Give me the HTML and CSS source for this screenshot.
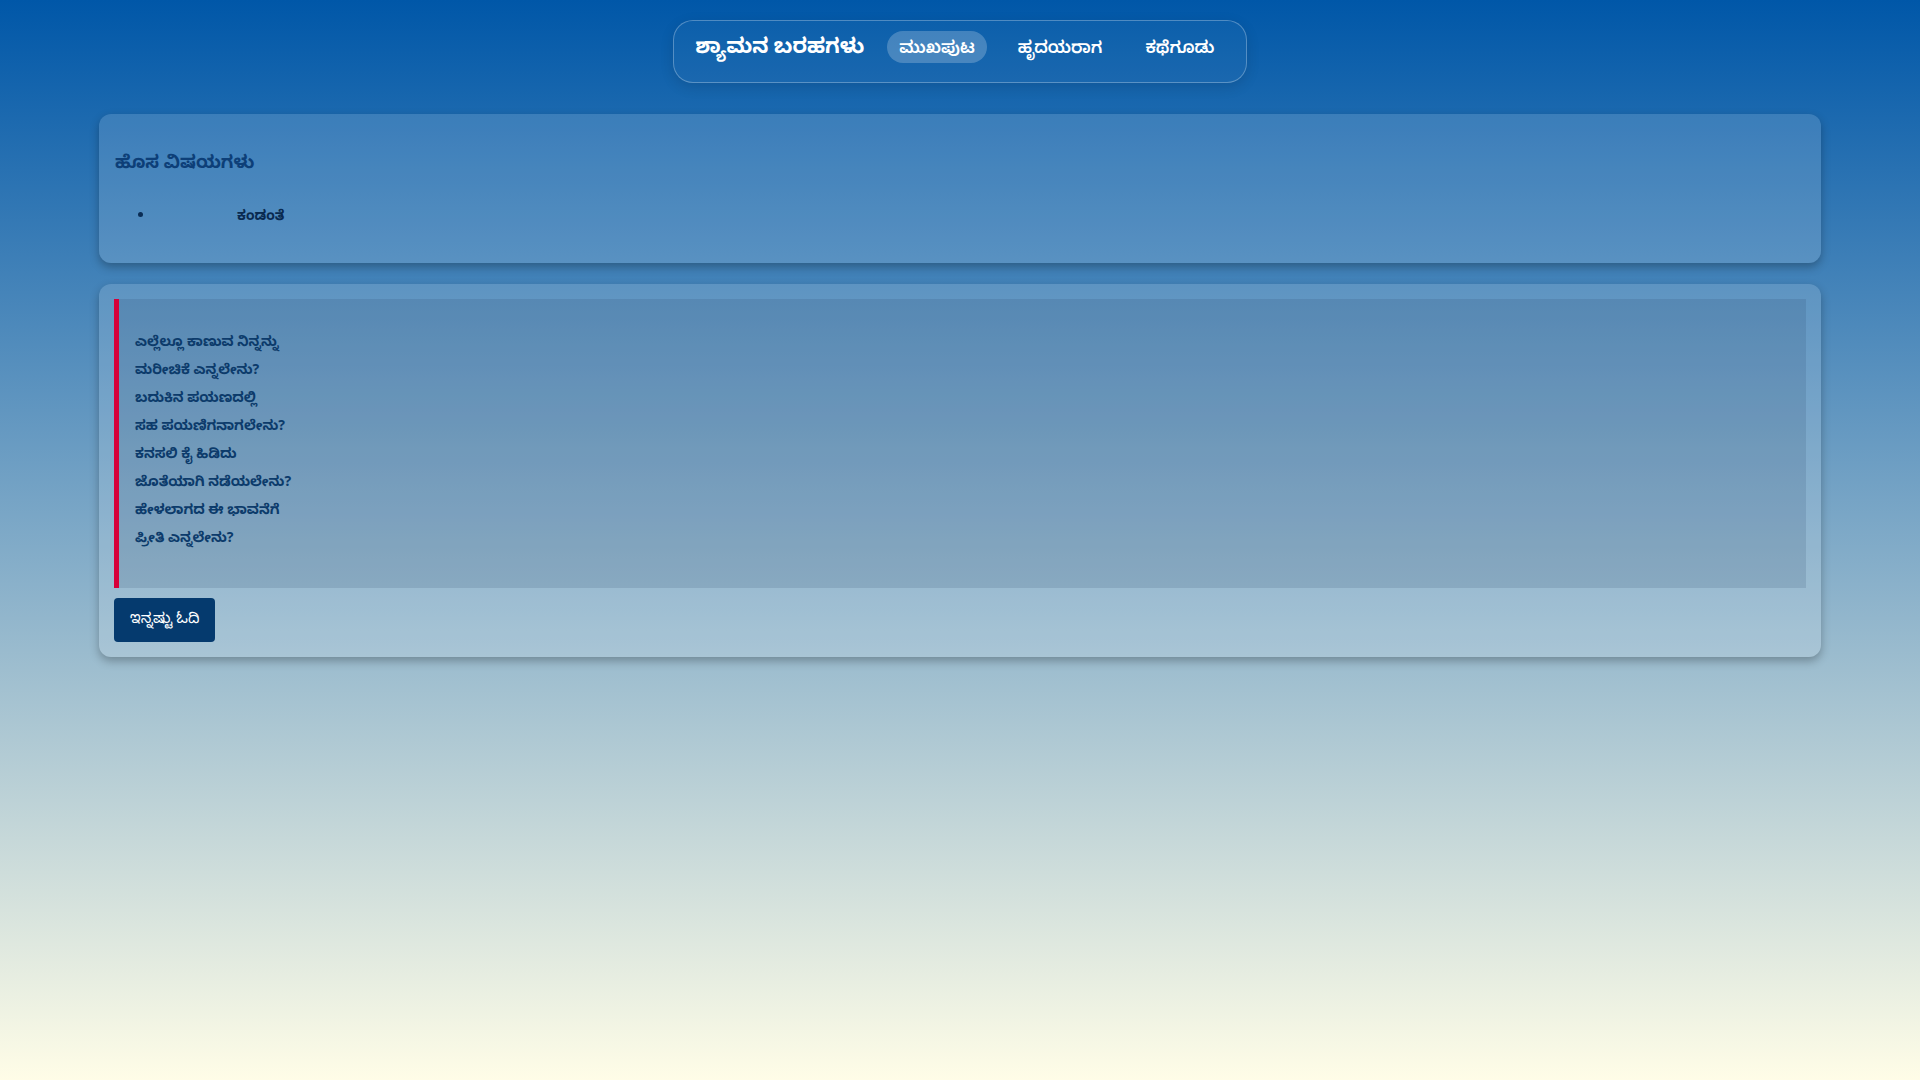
FILE: index.html
```html
<!DOCTYPE html>
<html lang="kn">
<head>
<meta charset="utf-8">
<title>ಶ್ಯಾಮನ ಬರಹಗಳು</title>
<link rel="stylesheet" href="styles.css">
</head>
<body>
<header class="top">
  <nav class="nav">
    <span class="brand">ಶ್ಯಾಮನ ಬರಹಗಳು</span>
    <a class="nav-link active" href="#">ಮುಖಪುಟ</a>
    <a class="nav-link" href="#">ಹೃದಯರಾಗ</a>
    <a class="nav-link" href="#">ಕಥೆಗೂಡು</a>
  </nav>
</header>
<main class="main">
  <section class="card">
    <h2 class="card-title">ಹೊಸ ವಿಷಯಗಳು</h2>
    <ul class="news">
      <li><span class="thumb"></span><a class="news-link" href="#">ಕಂಡಂತೆ</a></li>
    </ul>
  </section>
  <section class="card card-poem">
    <blockquote class="poem">
      <p>ಎಲ್ಲೆಲ್ಲೂ ಕಾಣುವ ನಿನ್ನನ್ನು<br>
      ಮರೀಚಿಕೆ ಎನ್ನಲೇನು?<br>
      ಬದುಕಿನ ಪಯಣದಲ್ಲಿ<br>
      ಸಹ ಪಯಣಿಗನಾಗಲೇನು?<br>
      ಕನಸಲಿ ಕೈ ಹಿಡಿದು<br>
      ಜೊತೆಯಾಗಿ ನಡೆಯಲೇನು?<br>
      ಹೇಳಲಾಗದ ಈ ಭಾವನೆಗೆ<br>
      ಪ್ರೀತಿ ಎನ್ನಲೇನು?</p>
    </blockquote>
    <a class="btn" href="#">ಇನ್ನಷ್ಟು ಓದಿ</a>
  </section>
</main>
</body>
</html>
```
FILE: styles.css
```css
html, body {
  margin: 0;
  padding: 0;
}
body {
  min-height: 100vh;
  background: linear-gradient(180deg, #0057a8 0%, #fffde7 100%);
  font-family: "Noto Sans", "Noto Sans Kannada", "DejaVu Sans", sans-serif;
  color: #0c3b6e;
}
.top {
  display: flex;
  justify-content: center;
  padding-top: 20px;
}
.nav {
  box-sizing: border-box;
  display: flex;
  align-items: center;
  gap: 19px;
  height: 63px;
  padding: 0 20px 9px 22px;
  border: 1px solid rgba(255, 255, 255, 0.28);
  border-radius: 20px;
  background: rgba(255, 255, 255, 0.03);
  box-shadow: 0 4px 14px rgba(0, 0, 0, 0.12);
}
.brand {
  color: #fff;
  font-weight: 700;
  font-size: 21px;
  margin-right: 4px;
}
.nav-link {
  color: #fff;
  text-decoration: none;
  font-size: 17px;
  font-weight: 600;
  line-height: 32px;
  padding: 0 12px;
  border-radius: 16px;
}
.nav-link.active {
  background: rgba(255, 255, 255, 0.22);
}
.main {
  display: flex;
  flex-direction: column;
  gap: 21px;
  padding: 31px 99px 0;
}
.card {
  background: rgba(255, 255, 255, 0.14);
  border-radius: 12px;
  padding: 16px;
  box-shadow: 0 4px 10px rgba(0, 0, 0, 0.28);
}
.card-title {
  margin: 16px 0;
  font-size: 18px;
  line-height: 30px;
  font-weight: 700;
  color: #0d3f78;
}
.news {
  margin: 0 0 9px;
  padding-left: 40px;
}
.news li {
  padding: 11px 0;
  line-height: 24px;
  font-size: 14px;
  color: #0a2d55;
}
.thumb {
  display: inline-block;
  width: 82px;
}
.news-link {
  color: #092a50;
  font-weight: 700;
  text-decoration: none;
}
.card-poem {
  padding: 15px;
}
.poem {
  margin: 0 0 10px;
  padding: 28px 16px 37px 16px;
  border-left: 5px solid #d6003a;
  background: rgba(30, 60, 90, 0.14);
}
.poem p {
  margin: 0;
  font-size: 14px;
  line-height: 28px;
  font-weight: 700;
  color: #0c3b6b;
}
.btn {
  display: inline-block;
  background: #053a6e;
  color: #fff;
  text-decoration: none;
  font-size: 15px;
  line-height: 28px;
  padding: 5px 16px 11px;
  border-radius: 4px;
}
```
